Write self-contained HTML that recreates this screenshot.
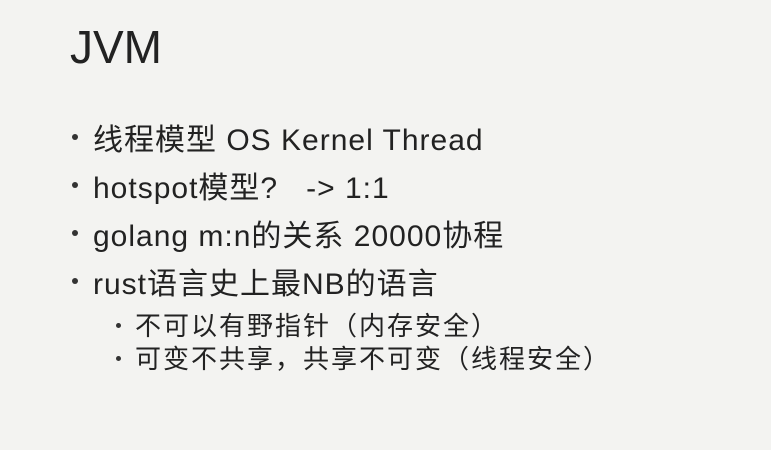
<!DOCTYPE html>
<html><head><meta charset="utf-8"><style>
html,body{margin:0;padding:0}
body{width:771px;height:450px;background:#f3f3f1;position:relative;overflow:hidden;font-family:"Liberation Sans","Noto Sans CJK SC",sans-serif;color:#222}
.t{position:absolute;white-space:nowrap}
.m{font-size:30px;letter-spacing:1px}
.n{font-size:26px;letter-spacing:2px}
.d{position:absolute;width:6px;height:6px;border-radius:50%;background:#333}
.s{position:absolute;width:5px;height:5px;border-radius:50%;background:#333}
</style></head><body>
<div class="t" style="left:70px;top:20px;font-size:46px;font-weight:300">JVM</div>
<div class="d" style="left:72px;top:134px"></div>
<div class="t m" style="left:93px;top:115px">线程模型 OS Kernel Thread</div>
<div class="d" style="left:72px;top:182px"></div>
<div class="t m" style="left:93px;top:163px">hotspot模型?&nbsp;&nbsp; -&gt; 1:1</div>
<div class="d" style="left:72px;top:230px"></div>
<div class="t m" style="left:93px;top:211px">golang m:n的关系 20000协程</div>
<div class="d" style="left:72px;top:278px"></div>
<div class="t m" style="left:93px;top:259px">rust语言史上最NB的语言</div>
<div class="s" style="left:116px;top:323px"></div>
<div class="t n" style="left:135px;top:306px">不可以有野指针（内存安全）</div>
<div class="s" style="left:116px;top:356px"></div>
<div class="t n" style="left:135px;top:339px">可变不共享，共享不可变（线程安全）</div>
</body></html>
